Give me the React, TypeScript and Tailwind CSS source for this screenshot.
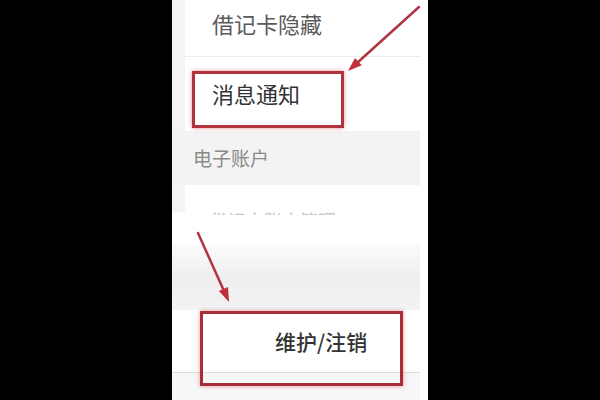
const cjk = { fontFamily: '"Noto Sans CJK SC", "Noto Sans", sans-serif' };

export default function App() {
  return (
    <div className="relative flex h-[400px] w-[600px] justify-center bg-black" style={cjk}>
      <div className="flex w-[256px] flex-col bg-white pr-[8px]">
        {/* 借记卡隐藏 */}
        <div className="flex h-[57px]">
          <div className="w-[13px] bg-[#f4f4f4]" />
          <div className="flex flex-1 items-start border-b border-[#ececec] bg-white pl-[27px] pt-[8px]">
            <span className="text-[22px] leading-[30px] text-[#5a5a5a]">借记卡隐藏</span>
          </div>
        </div>
        {/* 消息通知 */}
        <div className="flex h-[74px]">
          <div className="w-[13px] bg-[#f4f4f4]" />
          <div className="flex flex-1 items-start bg-white pl-[27px] pt-[21px]">
            <span className="text-[22px] leading-[30px] text-[#333]">消息通知</span>
          </div>
        </div>
        {/* 电子账户 */}
        <div className="flex h-[54px] items-center bg-[#f3f3f3] pl-[21px]">
          <span className="text-[19px] leading-[24px] text-[#8a8a8a]">电子账户</span>
        </div>
        {/* clipped row */}
        <div className="flex h-[60px]">
          <div className="flex w-[13px] flex-col">
            <div className="h-[27px] bg-[#f4f4f4]" />
          </div>
          <div className="flex-1 bg-white pl-[25px] pt-[26px]">
            <div className="h-[4px] overflow-hidden">
              <div className="text-[18px] leading-[18px] text-[#c6c6c6]">借记卡账户管理</div>
            </div>
          </div>
        </div>
        {/* gray band */}
        <div className="h-[65px] bg-gradient-to-b from-[#fbfbfb] via-[#eeeeee] to-[#f3f3f3]" />
        {/* 维护/注销 */}
        <div className="flex h-[63px] items-center border-b border-[#dcdcdc] bg-white pl-[103px]">
          <span className="text-[21px] font-medium leading-[30px] text-[#333]">维护/注销</span>
        </div>
        <div className="flex-1 bg-[#f7f7f7]" />
      </div>

      {/* annotation boxes */}
      <div className="absolute left-[192px] top-[71px] h-[57px] w-[152px] border-[3px] border-[#b1333e] shadow-[0_0_4px_rgba(210,70,80,0.6)]" />
      <div className="absolute left-[200px] top-[311px] h-[75px] w-[203px] border-[3px] border-[#a82f3a] shadow-[0_0_4px_rgba(210,70,80,0.6)]" />

      {/* arrows */}
      <svg className="absolute inset-0" width="600" height="400" viewBox="0 0 600 400">
        <g stroke="#b03542" strokeWidth="2.5" fill="#c0303c" strokeLinecap="round">
          <line x1="419" y1="7" x2="357" y2="63" />
          <polygon points="348,71 361.8,65.3 355,57.9" stroke="none" />
          <line x1="198" y1="233" x2="224" y2="291" />
          <polygon points="229,302 228,287.1 218.8,291.1" stroke="none" />
        </g>
      </svg>
    </div>
  );
}
